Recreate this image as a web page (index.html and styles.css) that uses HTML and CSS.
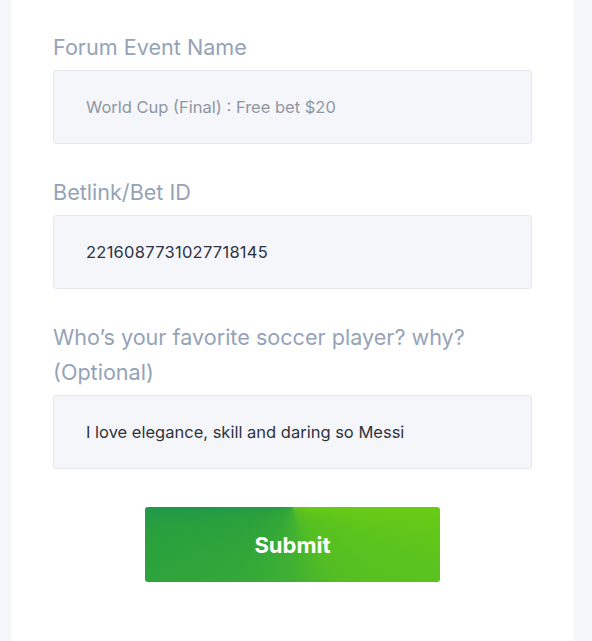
FILE: index.html
```
<!DOCTYPE html>
<html lang="en">
<head>
<meta charset="utf-8">
<title>Forum Event Form</title>
<link rel="stylesheet" href="styles.css">
</head>
<body>
<main class="card">
  <form class="form">
    <div class="field">
      <label class="label" for="event">Forum Event Name</label>
      <input class="input input-muted" id="event" type="text" value="World Cup (Final) : Free bet $20" readonly>
    </div>
    <div class="field">
      <label class="label" for="bet">Betlink/Bet ID</label>
      <input class="input input-num" id="bet" type="text" value="2216087731027718145">
    </div>
    <div class="field">
      <label class="label" for="player">Who’s your favorite soccer player? why?<br>(Optional)</label>
      <input class="input" id="player" type="text" value="I love elegance, skill and daring so Messi">
    </div>
    <div class="actions">
      <button class="submit" type="button">Submit</button>
    </div>
  </form>
</main>
</body>
</html>
```
FILE: styles.css
```
html, body {
  margin: 0;
  padding: 0;
  height: 100%;
}
body {
  background: #f5f6fa;
  font-family: Inter, "Noto Sans", sans-serif;
  padding-left: 11px;
  box-sizing: border-box;
}
.card {
  background: #ffffff;
  width: 563px;
  min-height: 100%;
  box-sizing: border-box;
  padding: 30px 42px 0 42px;
}
.form {
  display: flex;
  flex-direction: column;
  width: 479px;
}
.field {
  display: flex;
  flex-direction: column;
  margin-bottom: 31px;
}
.label {
  font-size: 21.6px;
  line-height: 35px;
  color: #95a3b8;
  margin-bottom: 5px;
}
.input {
  height: 74px;
  box-sizing: border-box;
  border: 1px solid #e4e7ee;
  border-radius: 3px;
  background: #f5f6fa;
  padding: 0 32px;
  font-family: Inter, "Noto Sans", sans-serif;
  font-size: 16.5px;
  color: #2f3340;
  outline: none;
}
.input-muted {
  color: #8f96a3;
}
.input-num {
  letter-spacing: 0.26px;
}
.actions {
  display: flex;
  justify-content: center;
  padding-top: 7px;
}
.submit {
  width: 295px;
  height: 75px;
  border: 0;
  border-radius: 3px;
  font-family: Inter, "Noto Sans", sans-serif;
  font-weight: 700;
  font-size: 22px;
  color: #ffffff;
  background: conic-gradient(from 180deg at 50% 0%,
    #3fb032 0deg,
    #33a838 40deg,
    #2aa03d 80deg,
    #21984a 90deg,
    #21984a 180deg,
    #68cb15 270deg,
    #5cc41d 290deg,
    #53bd24 330deg,
    #3fb032 360deg);
}
```
